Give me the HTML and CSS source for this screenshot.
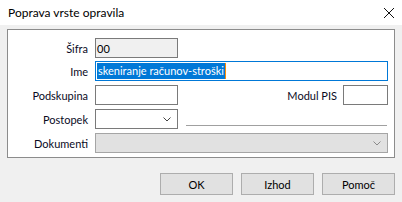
FILE: index.html
```html
<!DOCTYPE html>
<html lang="sl">
<head>
    <meta charset="UTF-8">
    <title>Poprava vrste opravila</title>
    <link rel="stylesheet" href="styles.css">
</head>
<body>
    <div class="window">
        <div class="title-bar">
            <span class="title">Poprava vrste opravila</span>
            <svg class="close" width="12" height="12" viewBox="0 0 12 12">
                <path d="M1 1 L11 11 M11 1 L1 11" stroke="#111" stroke-width="1" fill="none"/>
            </svg>
        </div>

        <div class="content">
            <div class="panel">
                <div class="row">
                    <label class="lbl">Šifra</label>
                    <div class="field short readonly">00</div>
                </div>
                <div class="row">
                    <label class="lbl">Ime</label>
                    <div class="field wide focused"><span class="sel">skeniranje računov-stroški</span><span class="caret"></span></div>
                </div>
                <div class="row">
                    <label class="lbl">Podskupina</label>
                    <div class="field short"></div>
                    <span class="spacer"></span>
                    <label class="lbl-inline">Modul PIS</label>
                    <div class="field tiny"></div>
                </div>
                <div class="row">
                    <label class="lbl">Postopek</label>
                    <div class="field short combo">
                        <svg class="chev" width="8" height="5" viewBox="0 0 8 5"><path d="M0.5 0.5 L4 4 L7.5 0.5" stroke="#444" fill="none"/></svg>
                    </div>
                    <span class="divider"></span>
                </div>
                <div class="row">
                    <label class="lbl">Dokumenti</label>
                    <div class="field wide combo disabled">
                        <svg class="chev" width="8" height="5" viewBox="0 0 8 5"><path d="M0.5 0.5 L4 4 L7.5 0.5" stroke="#8a8a8a" fill="none"/></svg>
                    </div>
                </div>
            </div>

            <div class="buttons">
                <button class="btn">OK</button>
                <button class="btn">Izhod</button>
                <button class="btn">Pomoč</button>
            </div>
        </div>
    </div>
</body>
</html>
```

FILE: styles.css
```css
* {
    margin: 0;
    padding: 0;
    box-sizing: border-box;
}

body {
    width: 402px;
    height: 202px;
    background: #f0f0f0;
    font-family: 'Lato', 'Noto Sans', sans-serif;
    font-size: 11px;
    color: #000;
    overflow: hidden;
}

.title-bar {
    height: 25px;
    background: #fff;
    display: flex;
    align-items: center;
    justify-content: space-between;
    padding: 0 7px 0 8px;
}

.title {
    font-size: 12px;
    color: #000;
}

.close {
    display: block;
}

.content {
    padding: 4px 7px 0 7px;
}

.panel {
    width: 388px;
    background: #fff;
    border: 1px solid #8c8c8c;
    padding: 8px 6px 4px 0;
}

.row {
    display: flex;
    align-items: center;
    height: 20px;
    margin-bottom: 4px;
}

.row:first-child {
    margin-bottom: 3px;
}

.row:last-child {
    margin-bottom: 0;
}

.lbl {
    width: 80px;
    text-align: right;
    margin-right: 7px;
    white-space: nowrap;
    color: #0a0a1e;
}

.lbl-inline {
    margin-right: 6px;
    white-space: nowrap;
    color: #0a0a1e;
}

.spacer {
    flex: 1;
}

.field {
    height: 20px;
    border: 1px solid #7a7a7a;
    background: #fff;
    display: flex;
    align-items: center;
    padding-left: 1px;
    position: relative;
    white-space: nowrap;
}

.short {
    width: 83px;
}

.wide {
    width: 293px;
}

.tiny {
    width: 45px;
}

.readonly {
    background: #f0f0f0;
    padding-left: 1px;
}

.focused {
    border-color: #0078d7;
}

.sel {
    background: #0078d7;
    color: #fff;
    line-height: 16px;
    padding: 0 1px 0 1px;
}

.caret {
    width: 1px;
    height: 16px;
    background: #ff8c00;
}

.combo .chev {
    position: absolute;
    right: 6px;
    top: 7px;
}

.disabled {
    background: #e1e1e1;
    border-color: #a5a5a5;
}

.divider {
    flex: 1;
    height: 1px;
    background: #a0a0a0;
    margin-left: 8px;
    align-self: flex-end;
    margin-bottom: 3px;
    margin-right: 1px;
}

.buttons {
    display: flex;
    justify-content: flex-end;
    gap: 8px;
    margin-top: 15px;
}

.btn {
    width: 73px;
    height: 22px;
    background: #e1e1e1;
    border: 1px solid #adadad;
    font-family: 'Lato', 'Noto Sans', sans-serif;
    font-size: 11px;
    color: #000;
}
```
